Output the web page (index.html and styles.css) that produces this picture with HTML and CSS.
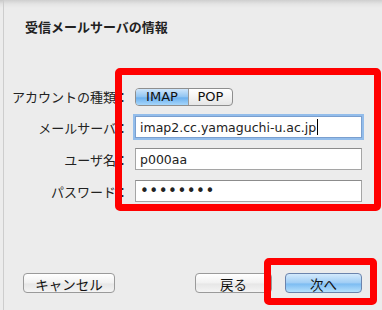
FILE: index.html
```html
<!DOCTYPE html>
<html lang="ja">
    <head>
        <meta charset="UTF-8">
        <title>受信メールサーバの情報</title>
        <link rel="stylesheet" href="styles.css">
    </head>
    <body>
        <div class="window">
            <div class="frame">
                <h2 class="title">受信メールサーバの情報</h2>

                <div class="form">
                    <div class="row">
                        <label>アカウントの種類：</label>
                        <div class="segmented">
                            <span class="seg seg-on">IMAP</span>
                            <span class="seg">POP</span>
                        </div>
                    </div>
                    <div class="row">
                        <label>メールサーバ：</label>
                        <div class="field field-focus">imap2.cc.yamaguchi-u.ac.jp<span class="caret"></span></div>
                    </div>
                    <div class="row">
                        <label>ユーザ名：</label>
                        <div class="field">p000aa</div>
                    </div>
                    <div class="row">
                        <label>パスワード：</label>
                        <div class="field field-pass">••••••••</div>
                    </div>
                </div>

                <div class="footer">
                    <button class="btn btn-cancel">キャンセル</button>
                    <button class="btn btn-back">戻る</button>
                    <button class="btn btn-next">次へ</button>
                </div>
            </div>

            <!-- annotation boxes -->
            <div class="mark mark-form"></div>
            <div class="mark mark-next"></div>
        </div>
    </body>
</html>
```

FILE: styles.css
```css
* {
    box-sizing: border-box;
    margin: 0;
    padding: 0;
}
body {
    width: 382px;
    height: 310px;
    overflow: hidden;
    background-color: #f3f3f3;
    font-family: "DejaVu Sans", "Noto Sans CJK JP", sans-serif;
    font-size: 13px;
    color: #222;
}
.window {
    position: relative;
    height: 310px;
    padding-left: 3px;
    background: linear-gradient(to bottom, #c9c9c9 0px, #e2e2e2 4px, #ececec 8px);
}
.frame {
    display: flex;
    flex-direction: column;
    height: 310px;
    border-left: 1px solid #cdcdcd;
    background: linear-gradient(to bottom, #cfcfcf 0px, #e4e4e4 4px, #ececec 8px);
}
.title {
    font-family: "Noto Sans CJK JP", sans-serif;
    font-size: 13px;
    font-weight: bold;
    line-height: 16px;
    margin: 19px 0 0 21px;
}
.form {
    display: flex;
    flex-direction: column;
    gap: 10px;
    margin-top: 52px;
}
.row {
    display: flex;
    align-items: center;
}
.row label {
    width: 125px;
    text-align: right;
    font-family: "Noto Sans CJK JP", sans-serif;
    font-size: 13px;
    margin-right: 6px;
}
.segmented {
    display: flex;
    height: 18px;
    border: 1px solid #8e8e8e;
    border-radius: 4px;
    overflow: hidden;
    background: linear-gradient(to bottom, #ffffff, #e6e6e6);
}
.seg {
    display: flex;
    align-items: center;
    justify-content: center;
    width: 52px;
    font-size: 13px;
    color: #111;
}
.seg + .seg {
    width: 44px;
    border-left: 1px solid #9a9a9a;
}
.seg-on {
    background: linear-gradient(to bottom, #cfe6fb 0%, #8fc4f2 50%, #6cb0ee 55%, #a6d6fb 100%);
}
.field {
    display: flex;
    align-items: center;
    width: 227px;
    height: 22px;
    padding-left: 4px;
    background-color: #fff;
    border: 1px solid #a5a5a5;
    border-top-color: #8c8c8c;
    font-size: 12.5px;
    white-space: nowrap;
}
.field-focus {
    border-color: #7a9fcf;
    box-shadow: 0 0 0 2px #93bdeb;
}
.caret {
    display: inline-block;
    width: 1px;
    height: 16px;
    background-color: #000;
    margin-left: 1px;
}
.field-pass {
    font-size: 15px;
    letter-spacing: 0.5px;
}
.footer {
    display: flex;
    margin-top: auto;
    margin-bottom: 17px;
    padding: 0 20px 0 19px;
}
.btn {
    height: 20px;
    border: 1px solid #9a9a9a;
    border-radius: 4px;
    background: linear-gradient(to bottom, #ffffff, #f1f1f1 50%, #e6e6e6 55%, #f4f4f4);
    font-family: "Noto Sans CJK JP", sans-serif;
    font-size: 13.5px;
    color: #111;
}
.btn-cancel {
    width: 92px;
}
.btn-back {
    width: 77px;
    margin-left: auto;
}
.btn-next {
    width: 77px;
    margin-left: 13px;
    border-color: #6b84ad;
    background: linear-gradient(to bottom, #d4eafc 0%, #9fcdf5 50%, #7cbcf2 55%, #b6e0fc 100%);
}
.mark {
    position: absolute;
    border: 7px solid #ff0000;
    border-radius: 5px;
}
.mark-form {
    left: 115px;
    top: 68px;
    width: 266px;
    height: 143px;
}
.mark-next {
    left: 264px;
    top: 258px;
    width: 113px;
    height: 47px;
}
```
